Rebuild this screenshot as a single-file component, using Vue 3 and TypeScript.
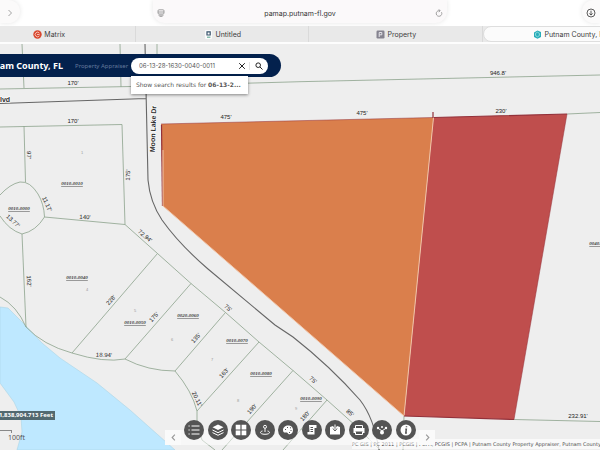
<script setup lang="ts">
import { ref } from 'vue'

interface MapLabel {
  x: number
  y: number
  text: string
  angle?: number
}

const query = ref('06-13-28-1630-0040-0011')

const distances: MapLabel[] = [
  { x: 73, y: 83, text: "170'" },
  { x: 73, y: 121, text: "170'" },
  { x: 29, y: 155, text: "97'", angle: 90 },
  { x: 128, y: 175, text: "175'", angle: -88 },
  { x: 47, y: 204, text: "11.17'", angle: 66 },
  { x: 13, y: 221, text: "13.77'", angle: 42 },
  { x: 85, y: 217, text: "140'", angle: 3 },
  { x: 145, y: 236, text: "72.94'", angle: 40 },
  { x: 29, y: 281, text: "162'", angle: 88 },
  { x: 111, y: 300, text: "228'", angle: -49 },
  { x: 154, y: 317, text: "175'", angle: -49 },
  { x: 104, y: 355, text: "18.94'", angle: 2 },
  { x: 228, y: 308, text: "75'", angle: 40 },
  { x: 196, y: 338, text: "135'", angle: -49 },
  { x: 224, y: 373, text: "163'", angle: -49 },
  { x: 197, y: 399, text: "20.11'", angle: 64 },
  { x: 313, y: 380, text: "75'", angle: 40 },
  { x: 252, y: 409, text: "190'", angle: -49 },
  { x: 305, y: 416, text: "180'", angle: -49 },
  { x: 350, y: 413, text: "85'", angle: 42 },
  { x: 226, y: 117, text: "475'" },
  { x: 362, y: 113, text: "475'" },
  { x: 501, y: 111, text: "230'" },
  { x: 498, y: 73, text: "946.8'" },
  { x: 578, y: 416, text: "232.91'" },
]

const parcels: MapLabel[] = [
  { x: 72, y: 183, text: '0010-0010' },
  { x: 19, y: 208, text: '0010-0000' },
  { x: 77, y: 277, text: '0010-0040' },
  { x: 135, y: 322, text: '0010-0050' },
  { x: 188, y: 315, text: '0020-0060' },
  { x: 237, y: 340, text: '0010-0070' },
  { x: 261, y: 373, text: '0010-0080' },
  { x: 311, y: 398, text: '0010-0090' },
  { x: 600, y: 243, text: '0040-0011' },
]

const lots: MapLabel[] = [
  { x: 82, y: 152, text: '1' },
  { x: 87, y: 289, text: '4' },
  { x: 135, y: 310, text: '5' },
  { x: 172, y: 339, text: '6' },
  { x: 212, y: 359, text: '7' },
  { x: 238, y: 400, text: '8' },
  { x: 296, y: 408, text: '9' },
]

const tools = ['Legend', 'Layers', 'Basemaps', 'Near me', 'Draw', 'Measure', 'Bookmark', 'Print', 'Share', 'About']
</script>

<template>
  <div class="browser">
    <header class="chrome">
      <div class="side">
        <button class="forward" aria-label="Forward">
          <svg viewBox="0 0 8 8"><path d="M2.5 1 5.5 4 2.5 7" /></svg>
        </button>
      </div>
      <div class="address">
        <button aria-label="Page menu">
          <svg viewBox="0 0 8 8"><rect x="1" y=".8" width="6" height="4.2" rx="1" /><path d="M1 3H7M1.5 6.2H6.5M2.5 7.6H5.5" /></svg>
        </button>
        <span>pamap.putnam-fl.gov</span>
        <button aria-label="Reload">
          <svg viewBox="0 0 8 8"><path d="M6.5 3.2A2.8 2.8 0 1 1 4 1.7H5M3.8.3 5.2 1.7 3.8 3" /></svg>
        </button>
      </div>
      <div class="side end">
        <button class="download" aria-label="Downloads">
          <svg viewBox="0 0 10 10"><circle cx="5" cy="5" r="4" /><path d="M5 2.7V7M3.3 5.4 5 7.1 6.7 5.4" /></svg>
        </button>
      </div>
    </header>

    <nav class="tabs">
      <a href="#matrix">
        <svg viewBox="0 0 9 9"><circle cx="4.5" cy="4.5" r="4.2" fill="#d9472f" /><path d="M6.4 3.2A2.3 2.3 0 1 0 6.4 5.8M4 4.5H6.6" fill="none" stroke="#f7c9bd" stroke-width=".9" /></svg>
        Matrix
      </a>
      <a href="#untitled">
        <svg viewBox="0 0 9 9"><rect x="1" width="7" height="9" rx="1" fill="#fafafa" /><path d="M3 1.8H6.2V5H3Z" fill="none" stroke="#39546d" stroke-width="1.2" /><path d="M3 7.2H6.4" stroke="#53a18c" /></svg>
        Untitled
      </a>
      <a href="#property">
        <svg viewBox="0 0 9 9"><rect x=".5" y=".5" width="8" height="8" rx="1.2" fill="#85838f" /><path d="M3.2 7V2.5H5.8V4.8H3.2" fill="none" stroke="#e5e4ea" /></svg>
        Property
      </a>
      <a href="#map" class="active" aria-current="page">
        <svg viewBox="0 0 9 9"><path d="M1 2.5 4.5.5 8 2V7L4.5 8.7 1 7Z" fill="#27adb9" /><path d="M2.5 3.3 4.5 2.2 6.4 3.4V5.6L4.5 6.8 2.6 5.7Z" fill="none" stroke="#a8e3e5" stroke-width=".8" /></svg>
        Putnam County, FL
      </a>
    </nav>

    <main class="map">
      <svg class="canvas" viewBox="0 44 600 406" preserveAspectRatio="xMinYMin slice" role="img" aria-label="Parcel map">
        <path class="water" d="M0 307 8 308 26 326 42 343 60 358 97 383 130 410 175 450H17L22 432 21 417 14 402 0 383Z" />
        <g class="lines">
          <path d="M0 89 131 86.500 300 81.700 600 75" />
          <path d="M22 44 24 88M120 44 121 87M157 44V85" />
          <path d="M0 127 122 124.500 125 224.500 44.500 217M24 126 25.500 182" />
          <path d="M0 195Q10 184 20 182Q30 181 38 194Q44 204 44.500 217Q36 231 22 234Q9 230 0 216" />
          <path d="M22 234 26 327M0 297Q17 306 26 327Q43 345 72 353Q104 363 125 359Q148 371 175 371Q192 391 197 411V422L202 440 215 450" />
          <path d="M125 224.500 157.500 253.500 191 283.500 225.500 312.500 259 342 293 370.500 327 400 356 426 380 450" />
          <path d="M157.500 253.500 72 353M191 283.500 125 359M225.500 312.500 175 371M259 342 197 411M293 370.500 222 450M327 400 283 450" />
          <path d="M567 114 600 112.500M514 419.500 600 421.500M404 416 403 450" />
        </g>
        <g class="road">
          <path d="M0 103.500 146 98.500M145 44 147 135 148 180Q150 202 162 220Q179 244 208 269L275 325 293 337Q330 366 360 400Q374 418 379 450" />
        </g>
        <path class="orange" d="M161 124 433.500 117.500 404 416 163 206Z" />
        <path class="red" d="M433.500 117.500 567 114 514 419.500 404 416Z" />
        <path class="edge" d="M161.500 125 162.500 206" />
        <path class="seam" d="M163 150V206L404 416 433.500 117.500" />
        <path class="rim" d="M434 117.500 567 114M404 416 514 419.500M433 112V118" />
        <path class="rim thin" d="M161 124 433 117.500M567 114 514 419.500" />

        <g class="distance">
          <text v-for="(l, i) in distances" :key="i" :transform="`translate(${l.x} ${l.y}) rotate(${l.angle ?? 0})`">{{ l.text }}</text>
        </g>
        <g class="parcel">
          <text v-for="l in parcels" :key="l.text" :x="l.x" :y="l.y">{{ l.text }}</text>
        </g>
        <g class="lot">
          <text v-for="l in lots" :key="l.text" :x="l.x" :y="l.y">{{ l.text }}</text>
        </g>
        <g class="street">
          <text x="0" y="99">lvd</text>
          <text transform="translate(153 129) rotate(-88)">Moon Lake Dr</text>
        </g>
      </svg>

      <section class="banner">
        <h1><span>Putnam County, FL</span></h1>
        <span class="subtitle">Property Appraiser</span>
        <form class="search" @submit.prevent>
          <input v-model="query" type="text" aria-label="Search parcels" />
          <button type="button" aria-label="Clear" @click="query = ''">
            <svg viewBox="0 0 8 8"><path d="M1.200 1.200 6.800 6.800M6.800 1.200 1.200 6.800" /></svg>
          </button>
          <button type="submit" class="go" aria-label="Search">
            <svg viewBox="0 0 8 8"><circle cx="3.200" cy="3.200" r="2.300" /><path d="M4.900 4.900 7.500 7.500" /></svg>
          </button>
          <button type="button" class="suggestion">Show search results for <b>06-13-2...</b></button>
        </form>
      </section>

      <div class="coords"><span>1,838,904.713 Feet</span></div>
      <div class="scale"><i></i>100ft</div>
      <div class="credits">PC GIS | PC 2011 | PCGIS | PCPA, PCGIS | PCPA | Putnam County Property Appraiser, Putnam County</div>

      <div class="dock">
        <button class="arrow" aria-label="Previous tools"><svg viewBox="0 0 8 8"><path d="M5.200 1.500 2.800 4 5.200 6.500" /></svg></button>
        <div class="tools">
          <button v-for="(name, i) in tools" :key="name" :aria-label="name">
            <svg viewBox="0 0 20 20">
              <g v-if="i === 0"><path d="M7.500 6H15.500M7.500 10H15.500M7.500 14H15.500" /><path d="M4.500 6H5.700M4.500 10H5.700M4.500 14H5.700" /></g>
              <g v-else-if="i === 1"><path class="fill" d="M10 4.500 15.500 7.200 10 10 4.500 7.200Z" /><path d="M4.500 10 10 12.700 15.500 10M4.500 12.600 10 15.300 15.500 12.600" /></g>
              <path v-else-if="i === 2" class="fill" d="M4.700 4.700H9.400V9.400H4.700ZM10.600 4.700H15.300V9.400H10.600ZM4.700 10.600H9.400V15.300H4.700ZM10.600 10.600H15.300V15.300H10.600Z" />
              <g v-else-if="i === 3"><circle cx="10" cy="6.800" r="1.500" /><path d="M10 8.300V12M7.500 11C4.500 11.500 4.500 14.300 10 14.300S15.500 11.500 12.500 11" /></g>
              <g v-else-if="i === 4"><path class="fill" d="M5 10C5 7 8 5 11 5.500C14.500 6 15.500 9 14.800 11.500C14.200 14 11.500 15 10.300 13.700C9.500 12.700 9 12.300 7.500 12.500C6 12.600 5 12 5 10Z" /><path class="cut" d="M7 9.500H8M9 7.500H10M12 7.800H13M12.500 10.500H13.500M11 12.500H12" /></g>
              <g v-else-if="i === 5"><path class="fill" d="M7 5H14.500V8H12.500V14.500H5.500V12H7.500Z" /><path class="cut" d="M8.500 7.500H11M8.500 9.500H11M8.500 11.500H11" /></g>
              <g v-else-if="i === 6"><path class="fill" d="M5 7 8 6 10 9 12 6 15 7V14.500H5Z" /><path d="M10 4.500V8" /><path class="cut" d="M8 8.500 10 11 12 8.500" /></g>
              <g v-else-if="i === 7"><path d="M6.500 8V5.500H13.500V8" /><path class="fill" d="M4.500 8H15.500V13H13.500V11.500H6.500V13H4.500Z" /><path d="M6.500 12V14.500H13.500V12" /></g>
              <g v-else-if="i === 8"><path d="M10 11 6.500 8.500M10 11 13.500 8.500" /><circle class="fill" cx="10" cy="12.500" r="2" /><circle class="fill" cx="6" cy="8" r="1.200" /><circle class="fill" cx="10" cy="7" r="1" /><circle class="fill" cx="14" cy="8" r="1.200" /></g>
              <g v-else><circle class="fill" cx="10" cy="10" r="5.500" /><path class="cut bold" d="M10.500 6.300V7.300M9.300 9.200H10.300L9.800 13H10.900" /></g>
            </svg>
          </button>
        </div>
        <button class="arrow" aria-label="More tools"><svg viewBox="0 0 8 8"><path d="M2.800 1.500 5.200 4 2.800 6.500" /></svg></button>
      </div>
    </main>
  </div>
</template>

<style>
body {
  margin: 0;
}
</style>

<style scoped>
.browser {
  display: flex;
  flex-direction: column;
  height: 100vh;
  overflow: hidden;
  background: #fff;
  font-family: Inter, "Liberation Sans", sans-serif;
}

button {
  margin: 0;
  padding: 0;
  border: 0;
  background: none;
  font: inherit;
  color: inherit;
  cursor: pointer;
}

svg {
  display: block;
}

.chrome {
  display: grid;
  grid-template-columns: 1fr 49% 1fr;
  align-items: start;
  height: 26px;
  flex: none;
}

.chrome svg {
  width: 8px;
  height: 8px;
  fill: none;
  stroke: #8b8b8b;
  stroke-width: 0.8;
}

.side {
  display: flex;
}

.end {
  justify-content: flex-end;
}

.forward,
.download {
  display: flex;
  align-items: center;
  height: 23px;
  background: #fbfafa;
  box-shadow: 0 0 5px #0000001a;
}

.forward {
  width: 20px;
  padding-left: 6px;
  border-radius: 0 12px 12px 0;
}

.forward svg {
  margin-top: 3px;
}

.download {
  width: 18px;
  padding-left: 4px;
  border-radius: 12px 0 0 12px;
}

.chrome .download svg {
  width: 10px;
  height: 10px;
  margin-top: 3px;
  stroke: #333;
}

.address {
  display: flex;
  align-items: center;
  justify-content: space-between;
  height: 23px;
  box-sizing: border-box;
  padding: 3px 4px 0;
  border-radius: 0 0 12px 12px;
  background: #fbf9fa;
  box-shadow: 0 0 5px #0000001a;
  font-size: 7px;
  color: #333;
}

.tabs {
  display: flex;
  flex: none;
  height: 16px;
  margin-left: -38px;
  background: #e9e9e9;
  border-bottom: 2px solid #fdfdfd;
}

.tabs a {
  display: flex;
  flex: none;
  align-items: center;
  justify-content: center;
  gap: 2px;
  width: 27.200%;
  box-sizing: border-box;
  padding-left: 2px;
  border-right: 1px solid #dadada;
  font-size: 7px;
  color: #3c3c3c;
  text-decoration: none;
  white-space: nowrap;
}

.tabs svg {
  width: 9px;
  height: 9px;
}

.tabs .active {
  border: 1px solid #dedede;
  border-radius: 8px;
  background: #fbfbfb;
}

.map {
  position: relative;
  flex: 1;
  min-height: 0;
  overflow: hidden;
  background: #eee;
}

.canvas {
  position: absolute;
  inset: 0;
  width: 100%;
  height: 100%;
}

.water {
  fill: #bee8ff;
  stroke: #abd5e6;
  stroke-width: 0.6;
}

.lines path {
  fill: none;
  stroke: #8ba28b;
  stroke-width: 0.8;
}

.road path {
  fill: none;
  stroke: #666;
  stroke-width: 1.1;
}

.orange {
  fill: #da7f4c;
}

.red {
  fill: #bf4e4d;
}

.edge,
.seam,
.rim {
  fill: none;
  stroke: #93313a;
  stroke-width: 1.2;
}

.seam {
  stroke: #f1c5a8;
  stroke-width: 1;
}

.thin {
  stroke-width: 0.5;
}

.canvas text {
  text-anchor: middle;
  dominant-baseline: central;
}

.distance text {
  font: 6px "Liberation Sans", sans-serif;
  fill: #222;
}

.parcel text {
  font: italic bold 5px "Liberation Serif", serif;
  fill: #444;
  text-decoration: underline;
}

.lot text {
  font: 4px "Liberation Sans", sans-serif;
  fill: #999;
}

.street text {
  font: bold 7px "Liberation Sans", sans-serif;
  fill: #2c2c2c;
  stroke: #fff;
  stroke-width: 1;
  paint-order: stroke;
}

.canvas .street text:first-child {
  text-anchor: start;
}

.banner {
  position: relative;
  display: flex;
  align-items: center;
  width: 281px;
  height: 23px;
  margin-top: 10px;
  border-radius: 0 12px 12px 0;
  background: #03214d;
  color: #fff;
}

h1 {
  display: flex;
  justify-content: flex-end;
  width: 63px;
  margin: 0;
  font: bold 9px "Noto Sans", sans-serif;
  white-space: nowrap;
}

.subtitle {
  width: 56px;
  margin-left: 12px;
  font: 6px "Noto Sans", sans-serif;
  color: #63799c;
  white-space: nowrap;
}

.search {
  position: relative;
  display: flex;
  align-items: center;
  width: 137px;
  height: 16px;
  border-radius: 8px;
  background: #fff;
}

.search input {
  flex: 1;
  min-width: 0;
  height: 16px;
  box-sizing: border-box;
  padding: 0 0 0 8px;
  border: 0;
  outline: 0;
  background: none;
  font: 6px Inter, sans-serif;
  color: #555;
}

.search svg {
  width: 8px;
  height: 8px;
  margin: 0 auto;
  fill: none;
  stroke: #222;
}

.search button {
  width: 14px;
}

.search .go {
  width: 19px;
  border-left: 1px solid #e5e5e5;
}

.search .suggestion {
  position: absolute;
  top: 18px;
  left: 0;
  width: 117px;
  height: 18px;
  padding-left: 5px;
  background: #fff;
  box-shadow: 0 1px 3px #00000073;
  font: 6px "DejaVu Sans", sans-serif;
  color: #555;
  text-align: left;
  white-space: nowrap;
}

.coords {
  position: absolute;
  left: 0;
  bottom: 30px;
  display: flex;
  justify-content: flex-end;
  width: 55px;
  height: 9px;
  box-sizing: border-box;
  padding-right: 2px;
  background: #526970;
  font: bold 6px/9px "Noto Sans", sans-serif;
  color: #fff;
  white-space: nowrap;
}

.scale {
  position: absolute;
  left: 0;
  bottom: 8px;
  font: 7px/9px "Noto Sans", sans-serif;
  color: #555;
  padding-left: 8px;
}

.scale i {
  display: block;
  width: 4px;
  height: 2px;
  margin-left: -8px;
  padding-left: 7px;
  border: solid #888;
  border-width: 1px 1px 0 0;
}

.credits {
  position: absolute;
  left: 352px;
  right: 0;
  bottom: 1px;
  height: 10px;
  overflow: hidden;
  background: #ffffffa6;
  font: 5px/10px "DejaVu Sans", sans-serif;
  color: #4c4c4c;
  white-space: nowrap;
}

.dock {
  position: absolute;
  left: 50%;
  bottom: 5px;
  display: flex;
  align-items: flex-end;
  justify-content: space-between;
  width: 270px;
  height: 25px;
  transform: translateX(-50%);
}

.dock::before {
  content: "";
  position: absolute;
  inset: 10px 16px 0;
  background: #ffffff80;
}

.arrow {
  width: 16px;
  height: 15px;
  background: #fafafa;
}

.arrow svg {
  width: 9px;
  height: 9px;
  margin: 0 auto;
  fill: none;
  stroke: #999;
}

.tools {
  position: relative;
  display: flex;
  justify-content: space-between;
  align-self: flex-start;
  width: 232px;
}

.tools button {
  width: 20px;
  height: 20px;
  border-radius: 50%;
  background: #545454;
}

.tools svg {
  width: 20px;
  height: 20px;
  fill: none;
  stroke: #fff;
  stroke-width: 1;
}

.tools .fill {
  fill: #fff;
  stroke: none;
}

.tools .cut {
  stroke: #545454;
}

.tools .bold {
  stroke-width: 1.5;
}
</style>
